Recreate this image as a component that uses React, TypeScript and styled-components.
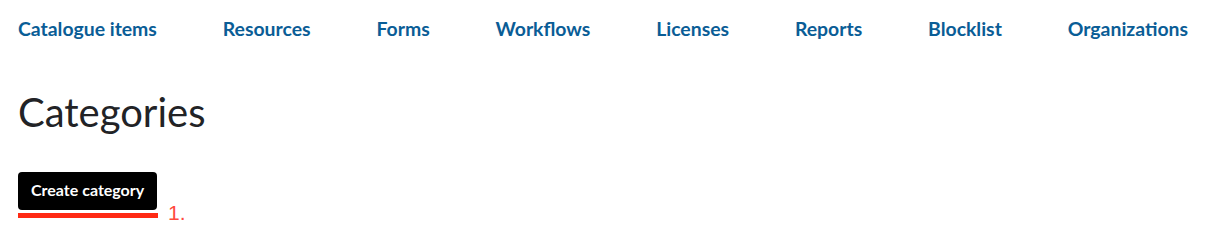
import React from "react";
import styled, { createGlobalStyle } from "styled-components";

const Global = createGlobalStyle`
  html, body { margin: 0; padding: 0; background: #fff; }
  body { font-family: Lato, "Open Sans", sans-serif; }
`;

const Page = styled.div`
  display: flex;
  flex-direction: column;
  min-height: 225px;
  box-sizing: border-box;
  padding: 0 17px 0 18px;
`;

const Nav = styled.nav`
  display: flex;
  justify-content: space-between;
  align-items: center;
  height: 58px;
`;

const NavLink = styled.a`
  color: #0a5d96;
  font-weight: 700;
  font-size: 19.4px;
  text-decoration: none;
  line-height: 24px;
`;

const Title = styled.h1`
  margin: 30px 0 0 0;
  font-size: 40px;
  font-weight: 400;
  line-height: 48px;
  color: #222326;
`;

const Actions = styled.div`
  display: flex;
  margin-top: 36px;
`;

const ButtonWrap = styled.div`
  position: relative;
`;

const Button = styled.button`
  display: block;
  background: #000;
  color: #fff;
  border: none;
  border-radius: 4px;
  height: 38px;
  padding: 0 13px 3px;
  font-family: Lato, sans-serif;
  font-weight: 700;
  font-size: 16px;
`;

const Underline = styled.span`
  position: absolute;
  left: 0;
  top: 41px;
  width: 140px;
  height: 5px;
  background: #ff2a14;
`;

const Marker = styled.span`
  position: absolute;
  left: 150px;
  top: 29.5px;
  color: #ff4a3d;
  font-family: "Liberation Sans", Arial, sans-serif;
  font-size: 21px;
  line-height: 21px;
  white-space: nowrap;
`;

const links = [
  "Catalogue items",
  "Resources",
  "Forms",
  "Workflows",
  "Licenses",
  "Reports",
  "Blocklist",
  "Organizations",
];

export default function App() {
  return (
    <>
      <Global />
      <Page>
        <Nav>
          {links.map((l) => (
            <NavLink key={l} href="#">
              {l}
            </NavLink>
          ))}
        </Nav>
        <Title>Categories</Title>
        <Actions>
          <ButtonWrap>
            <Button>Create category</Button>
            <Underline />
            <Marker>1.</Marker>
          </ButtonWrap>
        </Actions>
      </Page>
    </>
  );
}
